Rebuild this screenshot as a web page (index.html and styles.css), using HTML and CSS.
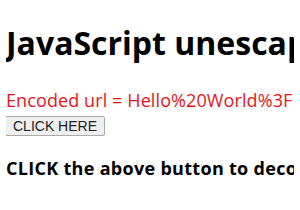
FILE: index.html
```html
<!DOCTYPE html>
<html lang="en">
<head>
  <meta charset="UTF-8" />
  <title>JavaScript unescape()</title>
  <link rel="stylesheet" href="styles.css">
</head>
<body>
  <h1>JavaScript unescape() with example</h1>
  <div class="sample">Encoded url = Hello%20World%3F</div>
  <button class="btn">CLICK HERE</button>
  <h3>CLICK the above button to decode the url</h3>
</body>
</html>
```
FILE: styles.css
```css
body {
  margin: 8px 6px;
  font-family: "Open Sans", "Noto Sans", sans-serif;
  background-color: #fff;
  white-space: nowrap;
  overflow: hidden;
}

h1 {
  margin: 15px 0 26px;
  font-size: 32px;
  line-height: 40px;
  font-weight: bold;
  color: #000;
}

.sample {
  font-size: 18px;
  line-height: 22px;
  letter-spacing: 0.1px;
  color: #e8141c;
}

.btn {
  display: block;
  margin-top: 5px;
  margin-left: -1px;
  font-family: "Liberation Sans", Arial, sans-serif;
  font-size: 14px;
  padding: 1px 7px;
  color: #222;
  background-color: #efefef;
  border: 1px solid #aaa;
  border-radius: 2px;
}

h3 {
  margin: 21px 0 0;
  font-size: 18px;
  line-height: 22px;
  letter-spacing: 0.3px;
  font-weight: bold;
}
```
